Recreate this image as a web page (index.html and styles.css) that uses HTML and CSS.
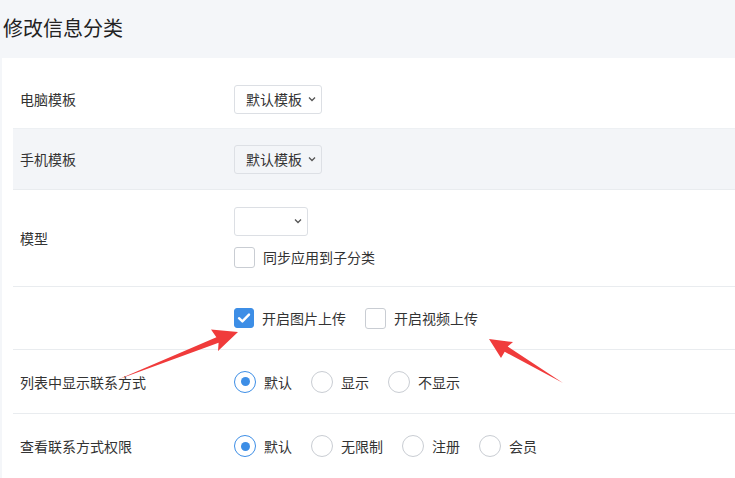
FILE: index.html
```html
<!DOCTYPE html>
<html lang="zh-CN">
<head>
<meta charset="utf-8">
<title>修改信息分类</title>
<link rel="stylesheet" href="styles.css">
</head>
<body>
<div class="page">
  <div class="header"><h1 class="title">修改信息分类</h1></div>
  <div class="panel">
    <div class="row row-1">
      <div class="label">电脑模板</div>
      <div class="control">
        <div class="select w88"><span>默认模板</span><svg class="chev" width="8" height="6" viewBox="0 0 8 6"><path d="M1 1.5 L4 4.5 L7 1.5" fill="none" stroke="#555" stroke-width="1.3"/></svg></div>
      </div>
    </div>
    <div class="row row-2 alt">
      <div class="label">手机模板</div>
      <div class="control">
        <div class="select w88"><span>默认模板</span><svg class="chev" width="8" height="6" viewBox="0 0 8 6"><path d="M1 1.5 L4 4.5 L7 1.5" fill="none" stroke="#555" stroke-width="1.3"/></svg></div>
      </div>
    </div>
    <div class="row row-3">
      <div class="label">模型</div>
      <div class="control stack">
        <div class="select w74"><span></span><svg class="chev" width="8" height="6" viewBox="0 0 8 6"><path d="M1 1.5 L4 4.5 L7 1.5" fill="none" stroke="#555" stroke-width="1.3"/></svg></div>
        <label class="opt"><span class="box"></span><span>同步应用到子分类</span></label>
      </div>
    </div>
    <div class="row row-4">
      <div class="label"></div>
      <div class="control">
        <label class="opt"><span class="box checked"><svg width="14" height="12" viewBox="0 0 14 12"><path d="M2 6.2 L5.4 9.4 L12 2.6" fill="none" stroke="#fff" stroke-width="2.4" stroke-linecap="round" stroke-linejoin="round"/></svg></span><span>开启图片上传</span></label>
        <label class="opt"><span class="box"></span><span>开启视频上传</span></label>
      </div>
    </div>
    <div class="row row-5">
      <div class="label">列表中显示联系方式</div>
      <div class="control">
        <label class="opt"><span class="radio on"></span><span>默认</span></label>
        <label class="opt"><span class="radio"></span><span>显示</span></label>
        <label class="opt"><span class="radio"></span><span>不显示</span></label>
      </div>
    </div>
    <div class="row row-6">
      <div class="label">查看联系方式权限</div>
      <div class="control">
        <label class="opt"><span class="radio on"></span><span>默认</span></label>
        <label class="opt"><span class="radio"></span><span>无限制</span></label>
        <label class="opt"><span class="radio"></span><span>注册</span></label>
        <label class="opt"><span class="radio"></span><span>会员</span></label>
      </div>
    </div>
  </div>
  <svg class="arrows" width="735" height="478" viewBox="0 0 735 478">
    <polygon points="238,332 211,329.5 216.4,337.2 118,379.5 218.6,342.8 218,351" fill="#f03b3b"/>
    <polygon points="489,339 513,342 507.7,346.6 563,383 504.7,351.8 501,358" fill="#f03b3b"/>
  </svg>
</div>
</body>
</html>
```

FILE: styles.css
```css
html, body {
  margin: 0;
  padding: 0;
}
body {
  background: #f4f6f9;
  font-family: "Noto Sans CJK SC", "Noto Sans", sans-serif;
  color: #333;
  overflow: hidden;
}
.page {
  position: relative;
  width: 735px;
  height: 478px;
  overflow: hidden;
}
.header {
  height: 58px;
  display: flex;
  align-items: center;
  padding-left: 3px;
}
.title {
  margin: 0;
  font-size: 20px;
  font-weight: normal;
  line-height: 1;
  color: #222;
  padding-bottom: 2px;
}
.panel {
  margin-left: 2px;
  background: #fff;
  padding: 12px 0 0 11px;
  height: 420px;
  box-sizing: border-box;
}
.row {
  display: flex;
  align-items: center;
  border-bottom: 1px solid #e9ecef;
  box-sizing: border-box;
}
.row-1 { height: 59px; border-bottom-color: #edf0f3; }
.row-2 { height: 61px; }
.row-3 { height: 97px; }
.row-4 { height: 63px; }
.row-5 { height: 64px; }
.row-6 { height: 64px; border-bottom: none; }
.alt { background: #f3f5f8; }
.label {
  width: 214px;
  padding-left: 7px;
  font-size: 14px;
  line-height: 20px;
  flex: none;
}
.control {
  display: flex;
  align-items: center;
  gap: 19px;
  font-size: 14px;
}
.control.stack {
  flex-direction: column;
  align-items: flex-start;
  gap: 11px;
  padding-bottom: 2px;
}
.select {
  height: 29px;
  border: 1px solid #dcdfe4;
  border-radius: 3px;
  box-sizing: border-box;
  display: flex;
  align-items: center;
  justify-content: space-between;
  padding: 0 5px 0 11px;
  font-size: 14px;
  color: #333;
}
.alt .select { border-color: #dde0e5; }
.w88 { width: 88px; }
.w74 { width: 74px; }
.chev { flex: none; }
.opt {
  display: flex;
  align-items: center;
  gap: 8px;
  line-height: 20px;
}
.box {
  width: 21px;
  height: 21px;
  box-sizing: border-box;
  border: 1px solid #c9cdd3;
  border-radius: 3px;
  background: #fff;
  display: flex;
  align-items: center;
  justify-content: center;
  flex: none;
}
.box.checked {
  width: 20px;
  height: 20px;
  background: #3d8ee6;
  border-color: #3d8ee6;
}
.radio {
  width: 22px;
  height: 22px;
  box-sizing: border-box;
  border: 1px solid #c9cdd3;
  border-radius: 50%;
  background: #fff;
  display: flex;
  align-items: center;
  justify-content: center;
  flex: none;
}
.radio.on { border-color: #3d8ee6; }
.radio.on::after {
  content: "";
  width: 9px;
  height: 9px;
  border-radius: 50%;
  background: #3d8ee6;
}
.arrows {
  position: absolute;
  left: 0;
  top: 0;
  pointer-events: none;
}
```
